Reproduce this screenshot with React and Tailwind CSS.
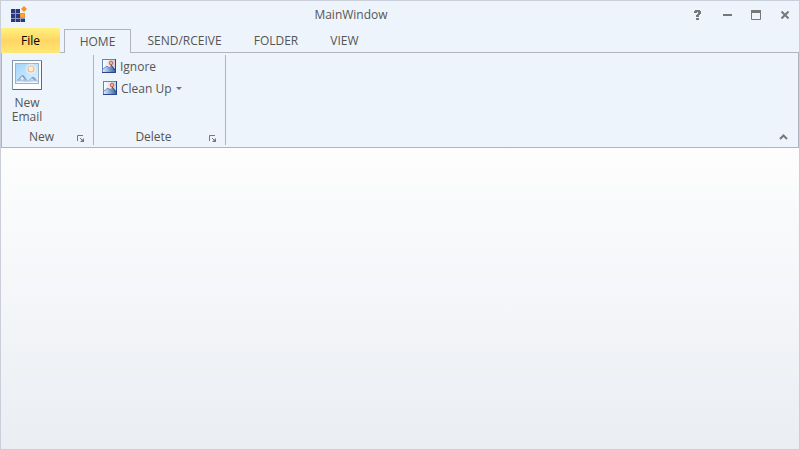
const TABS = [
  { name: "HOME", width: "w-[67px]" },
  { name: "SEND/RCEIVE", width: "w-[107px]" },
  { name: "FOLDER", width: "w-[76px]" },
  { name: "VIEW", width: "w-[61px]" },
];

function AppLogo() {
  return (
    <svg width="18" height="18" viewBox="0 0 18 18" className="block shrink-0" aria-hidden="true">
      <rect x="1" y="3" width="14" height="13" fill="#8d97c0" />
      <g fill="#2c3780">
        <rect x="1" y="3" width="4" height="4" />
        <rect x="6" y="3" width="4" height="4" />
        <rect x="1" y="8" width="4" height="4" />
        <rect x="6" y="8" width="4" height="4" />
        <rect x="1" y="13" width="4" height="3" />
        <rect x="6" y="13" width="4" height="3" />
        <rect x="11" y="13" width="4" height="3" />
      </g>
      <rect x="10" y="2" width="6" height="5" fill="#edf4fc" />
      <rect x="10" y="7" width="5" height="5" fill="#f7941d" />
      <rect x="11" y="8" width="3" height="3" fill="#ffa733" />
      <path d="M14 0l3 3-3 3-3-3z" fill="#f7941d" />
    </svg>
  );
}

function LargePicture() {
  return (
    <svg width="30" height="30" viewBox="0 0 30 30" className="block" aria-hidden="true">
      <defs>
        <linearGradient id="sky" x1="0" y1="0" x2="1" y2="1">
          <stop offset="0" stopColor="#a2d4fa" />
          <stop offset="1" stopColor="#dff4ff" />
        </linearGradient>
        <linearGradient id="hill" x1="0" y1="0" x2="0" y2="1">
          <stop offset="0" stopColor="#6689c3" />
          <stop offset=".55" stopColor="#8fabd8" />
          <stop offset="1" stopColor="#e2eefa" />
        </linearGradient>
        <radialGradient id="glow">
          <stop offset=".4" stopColor="#fff" />
          <stop offset="1" stopColor="#fff" stopOpacity="0" />
        </radialGradient>
      </defs>
      <rect x=".5" y=".5" width="29" height="29" fill="#fbfdff" stroke="#8496ac" />
      <path d="M1 29.500h28.500V1" fill="none" stroke="#536b84" />
      <rect x="3.500" y="3.500" width="23" height="20" fill="url(#sky)" stroke="#9db2c6" />
      <circle cx="19" cy="9" r="6" fill="url(#glow)" />
      <circle cx="19" cy="9" r="3" fill="#fff3dc" stroke="#f8b48c" strokeWidth="1.200" />
      <path d="M4 21l5-5 2-1 2 2 3 4 4-4 2 0 4 4v2H4z" fill="url(#hill)" />
      <path d="M10 16l-3 4 2-1 1 2 2-2 2 2z" fill="#dbe7f7" />
      <path d="M20 18l-2 3 2-1 2 1z" fill="#dbe7f7" />
      <path d="M4 23v-1c4-1 7 0 11 0s7-1 11 0v1z" fill="#f1f8ff" />
    </svg>
  );
}

function SmallPicture() {
  return (
    <svg width="14" height="14" viewBox="0 0 14 14" className="block shrink-0" aria-hidden="true">
      <defs>
        <linearGradient id="smallSky" x1="0" y1="0" x2="1" y2="0">
          <stop offset="0" stopColor="#fff" />
          <stop offset="1" stopColor="#b9d0f2" />
        </linearGradient>
        <linearGradient id="smallHill" x1="0" y1="0" x2="1" y2="0">
          <stop offset="0" stopColor="#dde7f6" />
          <stop offset="1" stopColor="#3e62a8" />
        </linearGradient>
      </defs>
      <rect x=".5" y=".5" width="13" height="13" fill="url(#smallSky)" stroke="#6684bc" />
      <path d="M1 10l4-3 2 1 2-1 4 4v2H1z" fill="url(#smallHill)" />
      <path d="M1 10l4-3 3 3" fill="none" stroke="#7086b2" />
      <path d="M9 6l4 5" fill="none" stroke="#33415f" strokeWidth="1.200" />
      <path d="M13.500 0v13.500H0" fill="none" stroke="#25458e" />
      <circle cx="9" cy="4" r="1.800" fill="#fbb982" stroke="#dc5a2a" />
    </svg>
  );
}

function Launcher({ label }) {
  return (
    <button aria-label={label} className="size-2 shrink-0">
      <svg width="8" height="8" viewBox="0 0 8 8" className="block" aria-hidden="true">
        <path d="M.5 6V.5H6" fill="none" stroke="#777" />
        <path d="M7 3v4H3z" fill="#777" />
        <path d="M3 3l3 3" stroke="#777" />
      </svg>
    </button>
  );
}

function Group({ name, width, children }) {
  return (
    <section aria-label={name} className={`${width} flex flex-col border-r border-[#b0b4c0]`}>
      <div className="h-[74px]">{children}</div>
      <div className="flex h-4 items-center pr-2 pl-1">
        <span className="flex-1 text-center">{name}</span>
        <div className="pt-1">
          <Launcher label={`${name} options`} />
        </div>
      </div>
    </section>
  );
}

function TitleBar() {
  return (
    <header className="flex h-[27px] items-center pr-[6px] pl-[9px]">
      <AppLogo />
      <h1 className="flex-1 pr-4 text-center">MainWindow</h1>
      <div className="flex items-center gap-[13px]">
        <button aria-label="Help" className="flex size-4 items-center justify-center">
          <svg width="8" height="10" viewBox="0 0 8 10" aria-hidden="true">
            <path
              d="M0 1h1V0h5v1h1v3H6v1H5v2H2V5h1V4h1V2H3v1H0zM2 8h3v2H2z"
              fill="#777"
            />
          </svg>
        </button>
        <button aria-label="Minimize" className="flex size-4 items-center justify-center">
          <svg width="10" height="10" viewBox="0 0 10 10" aria-hidden="true">
            <path d="M1 4h9v2H1z" fill="#777" />
          </svg>
        </button>
        <button aria-label="Maximize" className="flex size-4 items-center justify-center">
          <svg width="10" height="10" viewBox="0 0 10 10" aria-hidden="true">
            <path d="M.5 1v8.500h9V1" fill="none" stroke="#777" />
            <path d="M0 0h10v3H0z" fill="#777" />
          </svg>
        </button>
        <button aria-label="Close" className="flex size-4 items-center justify-center">
          <svg width="8" height="8" viewBox="0 0 8 8" aria-hidden="true">
            <path d="M.5.5l7 7M7.500.5l-7 7" stroke="#777" strokeWidth="2" />
          </svg>
        </button>
      </div>
    </header>
  );
}

export default function App() {
  return (
    <div className="flex min-h-screen flex-col border border-[#c9ced8] bg-[#edf4fc] font-['Open_Sans','Noto_Sans',sans-serif] text-[12px] leading-[14px] text-[#555]">
      <TitleBar />
      <nav className="flex h-[25px]">
        <button className="w-[59px] bg-linear-to-b from-[#fff27d] via-[#ffd666] to-[#ffe873] text-black">
          File
        </button>
        <div className="w-1 border-b border-[#b0b4c0]" />
        {TABS.map((tab, i) => (
          <button
            key={tab.name}
            className={`${tab.width} border-[#b0b4c0] ${i === 0 ? "mt-px border-x border-t" : "border-b pt-[2px]"}`}
          >
            {tab.name}
          </button>
        ))}
        <div className="flex-1 border-b border-[#b0b4c0]" />
      </nav>
      <div className="flex h-[95px] border-x border-b border-[#b0b4c0] pt-[2px] pb-[2px]">
        <Group name="New" width="w-[92px]">
          <button className="ml-[5px] flex w-10 flex-col items-center pt-[5px]">
            <LargePicture />
            <span className="pt-[6px]">New Email</span>
          </button>
        </Group>
        <Group name="Delete" width="w-[132px]">
          <div className="flex flex-col items-start gap-[6px] pt-1 pl-2">
            <button className="flex items-start gap-1 leading-4">
              <SmallPicture />
              Ignore
            </button>
            <button className="flex items-start gap-1 pl-px leading-4">
              <SmallPicture />
              Clean Up
              <svg width="8" height="14" viewBox="0 0 8 14" aria-hidden="true">
                <path d="M0 6h6L3 9z" fill="#777" />
              </svg>
            </button>
          </div>
        </Group>
        <div className="flex flex-1 items-end justify-end pr-[10px] pb-1">
          <button aria-label="Collapse ribbon">
            <svg width="9" height="8" viewBox="0 0 9 8" className="block" aria-hidden="true">
              <path d="M1 6l3.500-3.500L8 6" fill="none" stroke="#777" strokeWidth="2" />
            </svg>
          </button>
        </div>
      </div>
      <main className="flex-1 bg-linear-to-b from-[#fdfdfd] via-[#f4f6f9] to-[#eaedf2]" />
    </div>
  );
}
